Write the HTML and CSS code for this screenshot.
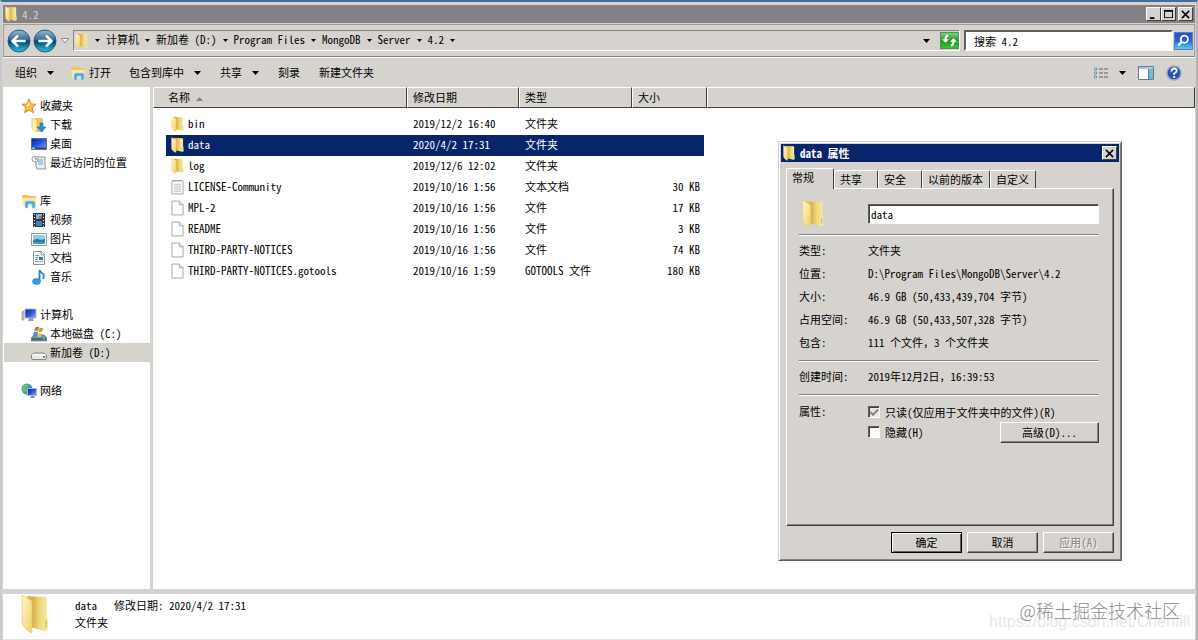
FILE: index.html
```html
<!DOCTYPE html>
<html lang="zh-CN">
<head>
  <meta charset="UTF-8">
  <meta name="viewport" content="width=device-width, initial-scale=1.0">
  <title>4.2</title>
  <link rel="stylesheet" href="styles.css">
</head>
<body>
  <!-- Iconos compartidos -->
  <svg class="sprite" aria-hidden="true">
    <defs>
      <linearGradient id="gFront" x1="0" y1="0" x2="1" y2="1">
        <stop offset="0" stop-color="#fff8cc"/><stop offset="1" stop-color="#efd069"/>
      </linearGradient>
      <linearGradient id="gBack" x1="0" y1="0" x2="1" y2="0">
        <stop offset="0" stop-color="#d9b54c"/><stop offset="0.3" stop-color="#d9b54c"/><stop offset="0.6" stop-color="#f0d67c"/><stop offset="1" stop-color="#faeda8"/>
      </linearGradient>
      <linearGradient id="gBlue" x1="0" y1="0" x2="0" y2="1">
        <stop offset="0" stop-color="#9db9cf"/><stop offset="0.45" stop-color="#2c6a9c"/><stop offset="0.5" stop-color="#07436f"/><stop offset="1" stop-color="#27c4ee"/>
      </linearGradient>
      <linearGradient id="gScreen" x1="0" y1="0" x2="1" y2="1">
        <stop offset="0" stop-color="#0a1fa0"/><stop offset="0.5" stop-color="#2a55d8"/><stop offset="1" stop-color="#7fb4f4"/>
      </linearGradient>
    </defs>
    <symbol id="folder" viewBox="0 0 28 40" preserveAspectRatio="none">
      <path d="M6 2l18 1q2 0 2 2v18l1 2v11l-3 1-15-4z" fill="url(#gBack)"/>
      <path d="M1 1l9 5q1 1 1 3v30q-5-2-8-6-2-2-2-5z" fill="url(#gFront)" stroke="#e3c468" stroke-width=".6"/>
      <path d="M25 26v8" stroke="#b4d36c" stroke-width="1.5"/>
    </symbol>
    <symbol id="explorer" viewBox="0 0 16 16">
      <path d="M1 3l1-1h5l1 1h6l1 1v9H2z" fill="#e9ca62"/>
      <path d="M1 5h14l-1 8H2z" fill="#fbe9a0"/>
      <path d="M4 15V10q0-2 2-2h6q2 0 2 2v5h-3v-4H7v4z" fill="#4da3dc" stroke="#b4dcf4" stroke-width=".7"/>
    </symbol>
    <symbol id="page" viewBox="0 0 14 17">
      <path d="M1 1h8l4 4v11H1z" fill="#fff" stroke="#a2a2a2"/>
      <path d="M9 1v4h4" fill="#e8e8e8" stroke="#a2a2a2"/>
    </symbol>
    <symbol id="textpage" viewBox="0 0 14 17">
      <path d="M1 2h12v14H1z" fill="#fff" stroke="#a0a5a8"/>
      <path d="M2 1.500h10" stroke="#787f84" stroke-dasharray="1 1"/>
      <path d="M3 5.500h8M3 7.500h8M3 9.500h8M3 11.500h8M3 13.500h8" stroke="#b4c0c8"/>
    </symbol>
    <symbol id="down" viewBox="0 0 7 4">
      <path d="M0 0h7L3.500 4z" fill="#000"/>
    </symbol>
    <symbol id="monitor" viewBox="0 0 16 16">
      <path d="M1 5l2-1v9H1z" fill="#c9c9bd" stroke="#83837a" stroke-width=".6"/>
      <path d="M4 2h11v9H4z" fill="url(#gScreen)" stroke="#b3b8c6"/>
      <path d="M8 11h4l1 3H7z" fill="#98a2ae"/>
    </symbol>
  </svg>

  <div class="window">
    <header class="titlebar">
      <svg class="ico-title"><use href="#folder"/></svg>
      <h1>4.2</h1>
      <div class="winbtns">
        <button type="button" aria-label="最小化"><svg viewBox="0 0 10 10"><path d="M1 8h5v2H1z"/></svg></button>
        <button type="button" aria-label="最大化"><svg viewBox="0 0 10 10"><path d="M0 0h10v9H0zM1 2v6h8V2z" fill-rule="evenodd"/></svg></button>
        <button type="button" class="close" aria-label="关闭"><svg viewBox="0 0 10 10"><path d="M1 1l8 8M9 1L1 9" stroke="#000" stroke-width="1.700"/></svg></button>
      </div>
    </header>

    <div class="navbar">
      <button type="button" class="round" aria-label="后退">
        <svg viewBox="0 0 24 24"><circle cx="12" cy="12" r="11" fill="url(#gBlue)" stroke="#2d5874"/><path d="M11 6.500L5.500 12l5.500 5.500M6 12h12.500" fill="none" stroke="#fff" stroke-width="2.500"/></svg>
      </button>
      <button type="button" class="round" aria-label="前进">
        <svg viewBox="0 0 24 24"><circle cx="12" cy="12" r="11" fill="url(#gBlue)" stroke="#2d5874"/><path d="M13 6.500l5.500 5.500-5.500 5.500M18 12H5.500" fill="none" stroke="#fff" stroke-width="2.500"/></svg>
      </button>
      <button type="button" class="history" aria-label="最近页面">
        <svg viewBox="0 0 8 6"><path d="M.5.500h7L4 5z" fill="#fff" stroke="#8b8b8b"/></svg>
      </button>
      <nav class="address">
        <svg class="ico-path"><use href="#folder"/></svg>
        <svg class="sep"><use href="#down"/></svg><a href="#">计算机</a>
        <svg class="sep"><use href="#down"/></svg><a href="#">新加卷 (D:)</a>
        <svg class="sep"><use href="#down"/></svg><a href="#">Program Files</a>
        <svg class="sep"><use href="#down"/></svg><a href="#">MongoDB</a>
        <svg class="sep"><use href="#down"/></svg><a href="#">Server</a>
        <svg class="sep"><use href="#down"/></svg><a href="#">4.2</a>
        <svg class="sep"><use href="#down"/></svg>
        <button type="button" class="open-path" aria-label="以前的位置"><svg class="arrow"><use href="#down"/></svg></button>
        <button type="button" class="refresh" aria-label="刷新">
          <svg viewBox="0 0 19 17"><path d="M8 3Q5 3 5 8" fill="none" stroke="#fff" stroke-width="2.500"/><path d="M1 7h8l-4 4z" fill="#fff"/><path d="M11 14q3 0 3-5" fill="none" stroke="#fff" stroke-width="2.500"/><path d="M10 10h8l-4-4z" fill="#fff"/></svg>
        </button>
      </nav>
      <form class="search">
        <input type="text" placeholder="搜索 4.2" aria-label="搜索 4.2">
        <button type="button" aria-label="搜索">
          <svg viewBox="0 0 18 18"><circle cx="10" cy="7" r="4" fill="none" stroke="#fff" stroke-width="2"/><path d="M7 10l-4 4" stroke="#fff" stroke-width="2.500"/></svg>
        </button>
      </form>
    </div>

    <div class="toolbar">
      <button type="button">组织 <svg class="arrow"><use href="#down"/></svg></button>
      <button type="button" class="open"><svg class="ico"><use href="#explorer"/></svg>打开</button>
      <button type="button">包含到库中 <svg class="arrow"><use href="#down"/></svg></button>
      <button type="button">共享 <svg class="arrow"><use href="#down"/></svg></button>
      <button type="button">刻录</button>
      <button type="button">新建文件夹</button>
      <div class="views">
        <button type="button" aria-label="更改视图">
          <svg class="ico" viewBox="0 0 16 16"><path d="M1.500 3h2v2h-2zM1.500 7h2v2h-2zM1.500 11h2v2h-2z" fill="#fff" stroke="#6e8fa8"/><path d="M6 4h4M11 4h4M6 8h4M11 8h4M6 12h4M11 12h4" stroke="#59636b"/></svg>
          <svg class="arrow"><use href="#down"/></svg>
        </button>
        <button type="button" aria-label="预览窗格">
          <svg class="ico" viewBox="0 0 16 16"><path d="M.5 1.500h15v13H.5z" fill="#fff" stroke="#5c7d96"/><path d="M1 2h14v2H1z" fill="#a8cbe0"/><path d="M10 4h5v10h-5z" fill="#72b8d5"/><path d="M10.500 4v10" stroke="#4e8bab"/></svg>
        </button>
        <button type="button" aria-label="帮助">
          <svg class="ico" viewBox="0 0 16 16"><circle cx="8" cy="8" r="7" fill="#2853b6" stroke="#97a5c8" stroke-width="1.500"/><path d="M5.500 6.500q0-3 2.700-3t2.500 2.300q0 1.400-2.500 2.700v1.200" fill="none" stroke="#fff" stroke-width="1.800"/><path d="M7.300 11h1.900v1.900H7.300z" fill="#fff"/></svg>
        </button>
      </div>
    </div>

    <div class="main">
      <aside class="tree">
        <ul>
          <li><a href="#"><svg class="ico" viewBox="0 0 16 16"><path d="M8 1l2 5 5 .3-4 3.400 1.500 5L8 12l-4.500 2.700L5 9.700 1 6.300 6 6z" fill="#fcc544" stroke="#df8420"/><path d="M8 3l1 4-4 2z" fill="#fff0a4"/></svg>收藏夹</a>
            <ul>
              <li><a href="#"><svg class="ico" viewBox="0 0 16 16"><path d="M4 1h7l1 1v13H4z" fill="#e9c95f"/><path d="M1 1l5 2v12l-5-3z" fill="#fff1ad" stroke="#dcb852" stroke-width=".6"/><path d="M9 6h3v4h3l-4.500 5L6 10h3z" fill="#2f8fda" stroke="#1d66a8" stroke-width=".6"/></svg>下载</a></li>
              <li><a href="#"><svg class="ico" viewBox="0 0 16 16"><path d="M.5 2.500h15v11H.5z" fill="url(#gScreen)" stroke="#57718f"/><path d="M1 11.500h14V13H1z" fill="#234570"/><path d="M1 11.500h3V13H1z" fill="#7fd3a8"/></svg>桌面</a></li>
              <li><a href="#"><svg class="ico" viewBox="0 0 16 16"><path d="M5 2h9v9l1 3H6l-1-3z" fill="#e7edf0" stroke="#8d979d"/><path d="M7 5h5M7 7h5M7 9h5" stroke="#6fa3c4"/><circle cx="4" cy="4" r="3" fill="#fff" stroke="#98a0a5"/><path d="M4 2v2h2" fill="none" stroke="#777"/></svg>最近访问的位置</a></li>
            </ul>
          </li>
          <li><a href="#"><svg class="ico"><use href="#explorer"/></svg>库</a>
            <ul>
              <li><a href="#"><svg class="ico" viewBox="0 0 16 16"><path d="M2 1h12v14H2z" fill="#2a343c"/><path d="M5 2h6v5H5z" fill="#76b6e6"/><path d="M5 9h6v5H5z" fill="#3e82c4"/><path d="M8 4h3v3H8z" fill="#c75b43"/><path d="M3.500 2v13M12.500 2v13" stroke="#fff" stroke-dasharray="1 2"/></svg>视频</a></li>
              <li><a href="#"><svg class="ico" viewBox="0 0 16 16"><path d="M.5 2.500h15v12H.5z" fill="#fff" stroke="#8c9ba5"/><path d="M2 4h12v9H2z" fill="#91cef4"/><path d="M2 10q4-4 7-1l5-1v5H2z" fill="#2d7c91"/><path d="M2 11h12v2H2z" fill="#3d9dd0"/></svg>图片</a></li>
              <li><a href="#"><svg class="ico" viewBox="0 0 16 16"><path d="M2.500 1.500h8l3 3v10h-11z" fill="#fff" stroke="#8895a0"/><path d="M10 1.500V5h3.500" fill="none" stroke="#8895a0"/><path d="M4 5.500h4M4 7.500h3M4 9.500h3M4 11.500h8" stroke="#7d9ab3"/><path d="M8 7h4v3H8z" fill="#3574b2"/></svg>文档</a></li>
              <li><a href="#"><svg class="ico" viewBox="0 0 16 16"><path d="M8.500 12V1q1 3 4 4 1 2-.5 5" fill="none" stroke="#1f86cf" stroke-width="1.800"/><ellipse cx="5.500" cy="12.500" rx="4" ry="3" fill="#2fa1e8" stroke="#1c72b4" stroke-width=".6"/></svg>音乐</a></li>
            </ul>
          </li>
          <li><a href="#"><svg class="ico"><use href="#monitor"/></svg>计算机</a>
            <ul>
              <li><a href="#"><svg class="ico" viewBox="0 0 16 16"><path d="M3 9h10l3 3v3H0v-3z" fill="#7798a3" stroke="#4f6870" stroke-width=".6"/><path d="M1 12h14v2H1z" fill="#3f6f80"/><path d="M12 12.500h2v1h-2z" fill="#71f070"/><path d="M4 2q2-2 4-1L7 5Q5 4 3 5z" fill="#e8622c"/><path d="M8.500 1.500q2 1 4 0L11 5.500q-2 1-3.500 0z" fill="#83bd3b"/><path d="M3 6q2-1 4 0L6 10Q4 9 2 10z" fill="#3f92d9"/><path d="M7.500 6.500q2 1 3.500 0l-1 4q-2 1-3.500 0z" fill="#f7c534"/></svg>本地磁盘 (C:)</a></li>
              <li><a href="#" class="current"><svg class="ico" viewBox="0 0 16 16"><path d="M3 8h10l2.500 2v3q0 1.500-1.500 1.500H2Q.5 14.500.5 13v-3z" fill="#e8e8e8" stroke="#858585"/><path d="M1 10h14" stroke="#fff"/><path d="M12 11h2v2h-2z" fill="#41b648"/></svg>新加卷 (D:)</a></li>
            </ul>
          </li>
          <li><a href="#"><svg class="ico" viewBox="0 0 16 16"><circle cx="6" cy="6" r="5.500" fill="#3c93d0"/><path d="M2 3q4-3 6-1l-3 3 1 3-3 1Q0 7 2 3z" fill="#6fc653"/><path d="M6.500 5.500h9v7h-9z" fill="url(#gScreen)" stroke="#b3b8c6"/><path d="M10 13h3l1 2H9z" fill="#87919b"/></svg>网络</a></li>
        </ul>
      </aside>

      <section class="files">
        <table>
          <colgroup>
            <col class="c-name"><col class="c-date"><col class="c-type"><col class="c-size"><col>
          </colgroup>
          <thead>
            <tr>
              <th class="name">名称 <svg class="sort" viewBox="0 0 7 4"><path d="M0 4h7L3.500 0z"/></svg></th>
              <th>修改日期</th><th>类型</th><th>大小</th><th aria-label="空"></th>
            </tr>
          </thead>
          <tbody>
            <tr><td class="name"><svg class="ico-row"><use href="#folder"/></svg>bin</td><td>2019/12/2 16:40</td><td>文件夹</td><td class="size"></td></tr>
            <tr class="selected"><td class="name"><svg class="ico-row"><use href="#folder"/></svg>data</td><td>2020/4/2 17:31</td><td>文件夹</td><td class="size"></td></tr>
            <tr><td class="name"><svg class="ico-row"><use href="#folder"/></svg>log</td><td>2019/12/6 12:02</td><td>文件夹</td><td class="size"></td></tr>
            <tr><td class="name"><svg class="ico-row"><use href="#textpage"/></svg>LICENSE-Community</td><td>2019/10/16 1:56</td><td>文本文档</td><td class="size">30 KB</td></tr>
            <tr><td class="name"><svg class="ico-row"><use href="#page"/></svg>MPL-2</td><td>2019/10/16 1:56</td><td>文件</td><td class="size">17 KB</td></tr>
            <tr><td class="name"><svg class="ico-row"><use href="#page"/></svg>README</td><td>2019/10/16 1:56</td><td>文件</td><td class="size">3 KB</td></tr>
            <tr><td class="name"><svg class="ico-row"><use href="#page"/></svg>THIRD-PARTY-NOTICES</td><td>2019/10/16 1:56</td><td>文件</td><td class="size">74 KB</td></tr>
            <tr><td class="name"><svg class="ico-row"><use href="#page"/></svg>THIRD-PARTY-NOTICES.gotools</td><td>2019/10/16 1:59</td><td>GOTOOLS 文件</td><td class="size">180 KB</td></tr>
          </tbody>
        </table>
      </section>
    </div>

    <footer class="details">
      <svg class="ico-big"><use href="#folder"/></svg>
      <div class="info">
        <p><span>data</span><span>修改日期: 2020/4/2 17:31</span></p>
        <p>文件夹</p>
      </div>
    </footer>
  </div>

  <!-- Ventana de propiedades -->
  <div class="dialog" role="dialog" aria-labelledby="dlgTitle">
    <div class="dlg-title">
      <svg class="ico-title"><use href="#folder"/></svg>
      <h2 id="dlgTitle">data 属性</h2>
      <div class="winbtns">
        <button type="button" aria-label="关闭"><svg viewBox="0 0 10 10"><path d="M1 1l8 8M9 1L1 9" stroke="#000" stroke-width="1.700"/></svg></button>
      </div>
    </div>
    <div class="tabs" role="tablist">
      <button type="button" role="tab" class="active" aria-selected="true">常规</button>
      <button type="button" role="tab">共享</button>
      <button type="button" role="tab">安全</button>
      <button type="button" role="tab">以前的版本</button>
      <button type="button" role="tab">自定义</button>
    </div>
    <div class="panel">
      <div class="row name-row">
        <svg class="ico-dlg"><use href="#folder"/></svg>
        <input type="text" value="data" aria-label="名称">
      </div>
      <hr>
      <dl class="props">
        <dt>类型:</dt><dd>文件夹</dd>
        <dt>位置:</dt><dd>D:\Program Files\MongoDB\Server\4.2</dd>
        <dt>大小:</dt><dd>46.9 GB (50,433,439,704 字节)</dd>
        <dt>占用空间:</dt><dd>46.9 GB (50,433,507,328 字节)</dd>
        <dt>包含:</dt><dd>111 个文件<span class="full">，</span>3 个文件夹</dd>
      </dl>
      <hr>
      <dl class="props">
        <dt>创建时间:</dt><dd>2019年12月2日<span class="full">，</span>16:39:53</dd>
      </dl>
      <hr>
      <div class="row attrs">
        <span class="label">属性:</span>
        <div class="checks">
          <label class="check"><input type="checkbox" class="mixed" checked>只读(仅应用于文件夹中的文件)(R)</label>
          <div class="check-line">
            <label class="check"><input type="checkbox">隐藏(H)</label>
            <button type="button" class="btn wide">高级(D)...</button>
          </div>
        </div>
      </div>
    </div>
    <div class="actions">
      <button type="button" class="btn default">确定</button>
      <button type="button" class="btn">取消</button>
      <button type="button" class="btn" disabled>应用(A)</button>
    </div>
  </div>

  <div class="mark-url">https://blog.csdn.net/Chenfill</div>
  <div class="mark">@稀土掘金技术社区</div>
</body>
</html>
```
FILE: styles.css
```css
* {
  box-sizing: border-box;
}
body {
  margin: 0;
  font-family: "Noto Sans CJK SC", sans-serif;
  font-size: 11px;
  line-height: 19px;
  font-feature-settings: "hwid";
  color: #000;
  background-color: #fff;
}
h1, h2, p, ul, dl, dd {
  margin: 0;
  padding: 0;
}
ul {
  list-style: none;
}
a {
  color: inherit;
  text-decoration: none;
}
button, input {
  font: inherit;
  font-feature-settings: inherit;
  color: inherit;
  margin: 0;
}
button {
  background: none;
  border: none;
  padding: 0;
  display: flex;
  align-items: center;
}
svg {
  display: block;
  flex: none;
}
.sprite {
  position: absolute;
  width: 0;
  height: 0;
}
.ico {
  width: 16px;
  height: 16px;
}
.arrow {
  width: 7px;
  height: 4px;
}
.full {
  font-feature-settings: normal;
}

/* Ventana principal */
.window {
  min-height: 100vh;
  display: flex;
  flex-direction: column;
  background-color: #d6d3ce;
  border-top: 2px solid #3a6ea5;
  border-left: 2px solid #c9c9c9;
  border-right: 2px solid #b5b5b5;
  padding: 3px 1px 0;
}
.titlebar, .dlg-title {
  display: flex;
  align-items: center;
  height: 18px;
  gap: 5px;
  padding: 0 2px;
  background-color: #848284;
  color: #d6d3ce;
}
.titlebar h1, .dlg-title h2 {
  flex: 1;
  font-size: 11px;
  line-height: 16px;
}
.titlebar h1 {
  font-weight: normal;
}
.ico-title {
  width: 12px;
  height: 16px;
}
.winbtns {
  display: flex;
}
.winbtns button {
  width: 15px;
  height: 14px;
  justify-content: center;
  background-color: #d6d3ce;
  border: 1px solid;
  border-color: #fff #404040 #404040 #fff;
}
.winbtns svg {
  width: 9px;
  height: 9px;
}
.winbtns .close {
  margin-left: 2px;
}

/* Barra de navegación */
.navbar {
  display: flex;
  align-items: center;
  height: 33px;
  margin-top: 1px;
  padding: 0 1px 0 3px;
  border: 1px solid #a09e9a;
  border-bottom-color: #848284;
}
.round {
  width: 24px;
  height: 24px;
  margin-right: 2px;
}
.round svg {
  width: 24px;
  height: 24px;
}
.history {
  width: 12px;
  justify-content: center;
}
.history svg {
  width: 8px;
  height: 6px;
}
.address {
  flex: 1;
  display: flex;
  align-items: center;
  height: 21px;
  margin: 0 4px 0 2px;
  border: 1px solid;
  border-color: #848284 #fff #fff #848284;
}
.address a {
  line-height: 17px;
  padding-bottom: 2px;
}
.ico-path {
  width: 13px;
  height: 16px;
  margin: 0 1px;
}
.sep {
  width: 5px;
  height: 3px;
  margin: 0 6px;
}
.open-path {
  margin-left: auto;
  padding: 0 10px;
}
.refresh {
  width: 19px;
  height: 17px;
  background: linear-gradient(#7dd07d, #1a9a22 50%, #35c435);
  border: 1px solid #4e9550;
}
.refresh svg {
  width: 17px;
  height: 15px;
}
.search {
  display: flex;
  align-items: center;
  gap: 1px;
}
.search input {
  width: 209px;
  height: 21px;
  padding: 0 8px;
  background-color: #fff;
  border: 2px solid;
  border-color: #606060 #fff #fff #606060;
  border-radius: 0;
}
.search input::placeholder {
  color: #000;
}
.search button {
  width: 19px;
  height: 18px;
  background: linear-gradient(#2b4bd0, #2c62dc 50%, #4fd0f5);
  border: 1px solid #5a82b4;
}
.search svg {
  width: 17px;
  height: 16px;
}

/* Barra de herramientas */
.toolbar {
  display: flex;
  align-items: center;
  gap: 19px;
  height: 30px;
  padding: 0 13px 0 12px;
  border-top: 1px solid #fff;
}
.toolbar button {
  gap: 10px;
}
.toolbar .open {
  gap: 3px;
  margin: 0 -1px 0 -3px;
}
.views {
  display: flex;
  gap: 12px;
  margin-left: auto;
}

/* Contenido */
.main {
  flex: 1;
  display: flex;
}
.tree {
  width: 150px;
  padding-top: 9px;
  background-color: #fff;
  border-right: 3px solid #d6d3ce;
}
.tree > ul {
  display: grid;
  gap: 19px;
}
.tree a {
  display: flex;
  align-items: center;
  gap: 3px;
  height: 19px;
  margin-left: 1px;
  padding-left: 17px;
}
.tree ul ul a {
  padding-left: 27px;
}
.tree .current {
  background-color: #d6d3ce;
}
.files {
  flex: 1;
  background-color: #fff;
}
.files table {
  width: 100%;
  table-layout: fixed;
  border-spacing: 0;
}
.c-name {
  width: 254px;
}
.c-date {
  width: 112px;
}
.c-type {
  width: 113px;
}
.c-size {
  width: 75px;
}
.files th {
  height: 21px;
  padding: 0 5px;
  font-weight: normal;
  text-align: left;
  background-color: #d6d3ce;
  border: 1px solid;
  border-color: #fff #404040 #404040 #fff;
}
.files th.name {
  padding-left: 14px;
}
.sort {
  display: inline-block;
  width: 7px;
  height: 4px;
  fill: #848284;
  vertical-align: middle;
}
.files tbody::before {
  content: "";
  display: block;
  height: 6px;
}
.files td {
  height: 21px;
  padding: 0 5px 2px 6px;
  white-space: nowrap;
}
.files td.name {
  display: flex;
  align-items: center;
  gap: 4px;
  margin-left: 13px;
  padding-left: 5px;
}
.files td.size {
  padding-right: 4px;
  text-align: right;
  border-right: 3px solid transparent;
  background-clip: padding-box;
}
.ico-row {
  width: 13px;
  height: 16px;
}
.selected td {
  background-color: #08246b;
  color: #fff;
}

/* Panel de detalles */
.details {
  display: flex;
  height: 51px;
  padding-left: 18px;
  background-color: #fff;
  border-top: 5px solid #d6d3ce;
  border-bottom: 1px solid #e4e4e4;
}
.ico-big {
  width: 28px;
  height: 40px;
  margin-right: 26px;
}
.info {
  padding-top: 3px;
}
.info p {
  display: flex;
  gap: 17px;
  line-height: 17px;
}

/* Diálogo */
.dialog {
  position: absolute;
  top: 141px;
  right: 76px;
  width: 344px;
  padding: 2px;
  background-color: #d6d3ce;
  border: 1px solid;
  border-color: #d6d3ce #606060 #606060 #d6d3ce;
  box-shadow: inset 1px 1px #fff, inset -1px -1px #848284;
}
.dlg-title {
  background-color: #08246b;
  color: #fff;
}
.tabs {
  display: flex;
  align-items: flex-end;
  height: 26px;
  padding-left: 5px;
}
.tabs button {
  min-width: 44px;
  height: 18px;
  padding: 0 6px 0 5px;
  border: 1px solid;
  border-color: #fff #404040 transparent #fff;
  border-bottom: none;
  border-radius: 2px 2px 0 0;
}
.tabs .active {
  position: relative;
  height: 21px;
  min-width: 48px;
  margin-bottom: -1px;
  padding-bottom: 3px;
  background-color: #d6d3ce;
}
.panel {
  margin: 0 5px;
  padding: 11px 14px 82px 12px;
  border: 1px solid;
  border-color: #fff #404040 #404040 #fff;
  box-shadow: inset -1px -1px #848284;
}
.row {
  display: flex;
}
.name-row {
  align-items: center;
  height: 28px;
}
.ico-dlg {
  width: 22px;
  height: 28px;
  margin: 0 44px 0 3px;
}
.name-row input {
  flex: 1;
  min-width: 0;
  height: 20px;
  padding: 0 2px;
  background-color: #fff;
  border: 1px solid;
  border-color: #606060 #fff #fff #606060;
  box-shadow: inset 1px 1px #404040;
}
.panel hr {
  height: 2px;
  margin: 6px 0 3px;
  border: 0;
  border-top: 1px solid #848284;
  border-bottom: 1px solid #fff;
}
.props {
  display: grid;
  grid-template-columns: 69px 1fr;
  line-height: 23px;
}
.attrs {
  padding-top: 3px;
}
.attrs .label {
  width: 69px;
  line-height: 19px;
}
.checks {
  flex: 1;
}
.check {
  display: flex;
  align-items: center;
  gap: 5px;
  height: 20px;
}
.check-line {
  display: flex;
  justify-content: space-between;
}
.check input {
  appearance: none;
  width: 12px;
  height: 12px;
  background-color: #fff;
  border: 1px solid;
  border-color: #606060 #fff #fff #606060;
  box-shadow: inset 1px 1px #404040;
}
.check .mixed {
  display: flex;
  align-items: center;
  justify-content: center;
  background-color: #e9e7e4;
}
.mixed::before {
  content: "";
  width: 6px;
  height: 3px;
  border: solid #848284;
  border-width: 0 0 2px 2px;
  transform: translateY(-1px) rotate(-45deg);
}
.actions {
  display: flex;
  justify-content: flex-end;
  gap: 5px;
  padding: 6px 5px 5px;
}
.btn {
  justify-content: center;
  width: 71px;
  height: 21px;
  border: 1px solid;
  border-color: #fff #404040 #404040 #fff;
  box-shadow: inset -1px -1px #848284;
}
.btn.wide {
  width: 99px;
}
.btn.default {
  border-color: #000;
  box-shadow: inset 1px 1px #fff, inset -1px -1px #606060;
}
.btn:disabled {
  color: #848284;
  text-shadow: 1px 1px #fff;
}

/* Marcas de agua */
.mark, .mark-url {
  position: absolute;
  white-space: nowrap;
}
.mark {
  right: 18px;
  bottom: 17px;
  font-size: 18px;
  line-height: 26px;
  font-weight: 300;
  font-feature-settings: normal;
  color: #8c8c8c;
}
.mark-url {
  right: 8px;
  bottom: 8px;
  font-family: "Liberation Sans", sans-serif;
  font-size: 16px;
  line-height: 20px;
  color: #e8e8e8;
}
```
